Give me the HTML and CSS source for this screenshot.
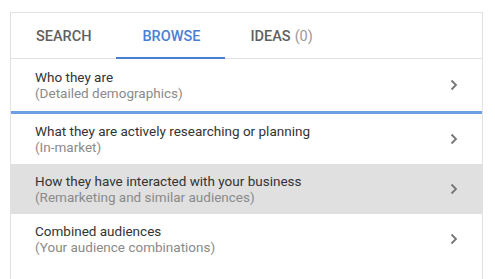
FILE: index.html
```html
<!DOCTYPE html>
<html lang="en">
<head>
    <meta charset="UTF-8">
    <meta name="viewport" content="width=device-width, initial-scale=1.0">
    <title>Audiences</title>
    <link rel="stylesheet" href="styles.css">
</head>
<body>
    <div class="panel">
        <!-- Tabs -->
        <div class="tabs">
            <div class="tab">SEARCH</div>
            <div class="tab active">BROWSE</div>
            <div class="tab">IDEAS <span class="count">(0)</span></div>
        </div>

        <!-- Browse categories -->
        <div class="list">
            <div class="row">
                <div class="row-text">
                    <div class="title">Who they are</div>
                    <div class="sub">(Detailed demographics)</div>
                </div>
                <svg class="chevron" width="8" height="12" viewBox="0 0 8 12"><path d="M1.5 1.5 L6 6 L1.5 10.5" fill="none" stroke="#757575" stroke-width="1.8"/></svg>
            </div>
            <div class="row focused">
                <div class="row-text">
                    <div class="title">What they are actively researching or planning</div>
                    <div class="sub">(In-market)</div>
                </div>
                <svg class="chevron" width="8" height="12" viewBox="0 0 8 12"><path d="M1.5 1.5 L6 6 L1.5 10.5" fill="none" stroke="#757575" stroke-width="1.8"/></svg>
            </div>
            <div class="row hover">
                <div class="row-text">
                    <div class="title">How they have interacted with your business</div>
                    <div class="sub">(Remarketing and similar audiences)</div>
                </div>
                <svg class="chevron" width="8" height="12" viewBox="0 0 8 12"><path d="M1.5 1.5 L6 6 L1.5 10.5" fill="none" stroke="#757575" stroke-width="1.8"/></svg>
            </div>
            <div class="row">
                <div class="row-text">
                    <div class="title">Combined audiences</div>
                    <div class="sub">(Your audience combinations)</div>
                </div>
                <svg class="chevron" width="8" height="12" viewBox="0 0 8 12"><path d="M1.5 1.5 L6 6 L1.5 10.5" fill="none" stroke="#757575" stroke-width="1.8"/></svg>
            </div>
        </div>
    </div>
</body>
</html>
```

FILE: styles.css
```css
body {
    font-family: Roboto, "Liberation Sans", sans-serif;
    margin: 0;
    padding: 12px 0 0 10px;
    background-color: #fff;
    overflow: hidden;
}

.panel {
    width: 471px;
    height: 267px;
    border: 1px solid #e2e2e2;
    border-bottom: none;
    background-color: #fff;
}

.tabs {
    display: flex;
    height: 45px;
    border-bottom: 1px solid #e2e2e2;
}

.tab {
    display: flex;
    align-items: center;
    padding: 2px 25px 0 25px;
    font-size: 14.5px;
    font-weight: 500;
    color: #5f5f5f;
    border-bottom: 2px solid transparent;
    margin-bottom: -1px;
}

.tab.active {
    color: #4a80d4;
    border-bottom-color: #4a80d4;
    padding: 2px 25px 0 26px;
}

.count {
    color: #9a9a9a;
    font-weight: 400;
    margin-left: 4px;
}

.row {
    display: flex;
    align-items: center;
    justify-content: space-between;
    height: 50px;
    padding: 0 24px 0 24px;
}

.row:first-child {
    height: 52px;
}

.row.focused {
    border-top: 3px solid #6e9fe4;
}

.row.hover {
    background-color: #e0e0e0;
}

.title {
    font-size: 13.5px;
    line-height: 16px;
    color: #333;
}

.sub {
    font-size: 13.5px;
    line-height: 16px;
    color: #8a8a8a;
}
```
